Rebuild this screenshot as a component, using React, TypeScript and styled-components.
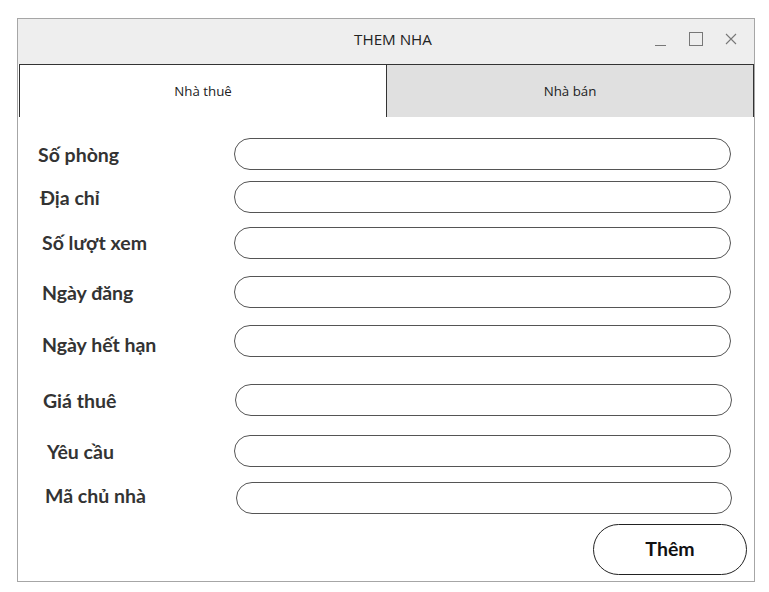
import React from "react";
import styled, { createGlobalStyle } from "styled-components";

const Global = createGlobalStyle`
  html, body { margin: 0; padding: 0; background: #ffffff; }
  body { font-family: "Open Sans", "Noto Sans", sans-serif; }
  * { box-sizing: border-box; }
`;

const Page = styled.div`
  padding: 18px 0 0 17px;
`;

const Window = styled.div`
  width: 738px;
  height: 564px;
  border: 1px solid #a6a6a6;
  background: #ffffff;
  display: flex;
  flex-direction: column;
`;

const TitleBar = styled.div`
  flex-shrink: 0;
  height: 45px;
  background: #eeeeee;
  position: relative;
  display: flex;
  align-items: center;
  justify-content: center;
`;

const Title = styled.div`
  font-family: "Open Sans", sans-serif;
  font-size: 15.2px;
  color: #222;
  margin-top: -6px;
  padding-left: 14px;
`;

const Controls = styled.div`
  position: absolute;
  right: 16px;
  top: 12px;
  display: flex;
  gap: 20px;
  align-items: center;
`;

const Tabs = styled.div`
  flex-shrink: 0;
  display: flex;
  height: 53px;
  margin: 0 0 0 1px;
`;

const Tab = styled.div<{ $active?: boolean }>`
  flex: 1;
  display: flex;
  align-items: center;
  justify-content: center;
  font-family: "Open Sans", sans-serif;
  font-size: 13.3px;
  color: #222;
  background: ${(p) => (p.$active ? "#ffffff" : "#e0e0e0")};
  border-top: 1.5px solid #333;
  border-right: 1.5px solid #333;
  border-left: ${(p) => (p.$active ? "1.5px solid #333" : "none")};
  padding-bottom: 1px;
`;

const Form = styled.div`
  flex-shrink: 0;
  padding: 21px 22px 0 0;
  display: flex;
  flex-direction: column;
`;

const Row = styled.div<{ $gap: number }>`
  display: flex;
  align-items: center;
  height: 32px;
  margin-top: ${(p) => p.$gap}px;
`;

const Label = styled.div<{ $indent: number; $dy: number }>`
  width: 216px;
  padding-left: ${(p) => p.$indent}px;
  margin-top: ${(p) => p.$dy * 2}px;
  font-family: "Lato", sans-serif;
  font-weight: 700;
  font-size: 19.5px;
  color: #333;
`;

const Field = styled.input<{ $shift: number }>`
  width: 497px;
  height: 32px;
  margin-left: ${(p) => p.$shift}px;
  border: 1.5px solid #555;
  border-radius: 16px;
  background: #fff;
  outline: none;
`;

const Footer = styled.div`
  flex-shrink: 0;
  display: flex;
  justify-content: flex-end;
  padding: 10px 7px 0 0;
`;

const Button = styled.button`
  width: 154px;
  height: 51px;
  border: 1.5px solid #222;
  border-radius: 26px;
  background: #fff;
  font-family: "Lato", sans-serif;
  font-weight: 700;
  font-size: 19.5px;
  color: #111;
  padding-bottom: 3px;
`;

const rows = [
  { label: "Số phòng", gap: 0, indent: 20, shift: 0, dy: 0 },
  { label: "Địa chỉ", gap: 11, indent: 22, shift: 0, dy: 0 },
  { label: "Số lượt xem", gap: 14, indent: 24, shift: 0, dy: -1 },
  { label: "Ngày đăng", gap: 17, indent: 24, shift: 0, dy: 0 },
  { label: "Ngày hết hạn", gap: 17, indent: 24, shift: 0, dy: 3 },
  { label: "Giá thuê", gap: 27, indent: 25, shift: 1, dy: 0 },
  { label: "Yêu cầu", gap: 19, indent: 29, shift: 0, dy: 0 },
  { label: "Mã chủ nhà", gap: 15, indent: 27, shift: 2, dy: -3 },
];

export default function App() {
  return (
    <Page>
      <Global />
      <Window>
        <TitleBar>
          <Title>THEM NHA</Title>
          <Controls>
            <svg width="14" height="16" viewBox="0 0 14 16">
              <line x1="1" y1="14.5" x2="12" y2="14.5" stroke="#777" strokeWidth="1" />
            </svg>
            <svg width="16" height="16" viewBox="0 0 16 16">
              <rect x="1.5" y="1.5" width="13" height="13" fill="none" stroke="#777" strokeWidth="1" />
            </svg>
            <svg width="14" height="14" viewBox="0 0 14 14">
              <path d="M2 2 L12 12 M12 2 L2 12" stroke="#777" strokeWidth="1.1" />
            </svg>
          </Controls>
        </TitleBar>
        <Tabs>
          <Tab $active>Nhà thuê</Tab>
          <Tab>Nhà bán</Tab>
        </Tabs>
        <Form>
          {rows.map((r) => (
            <Row key={r.label} $gap={r.gap}>
              <Label $indent={r.indent} $dy={r.dy}>
                {r.label}
              </Label>
              <Field $shift={r.shift} />
            </Row>
          ))}
        </Form>
        <Footer>
          <Button>Thêm</Button>
        </Footer>
      </Window>
    </Page>
  );
}
